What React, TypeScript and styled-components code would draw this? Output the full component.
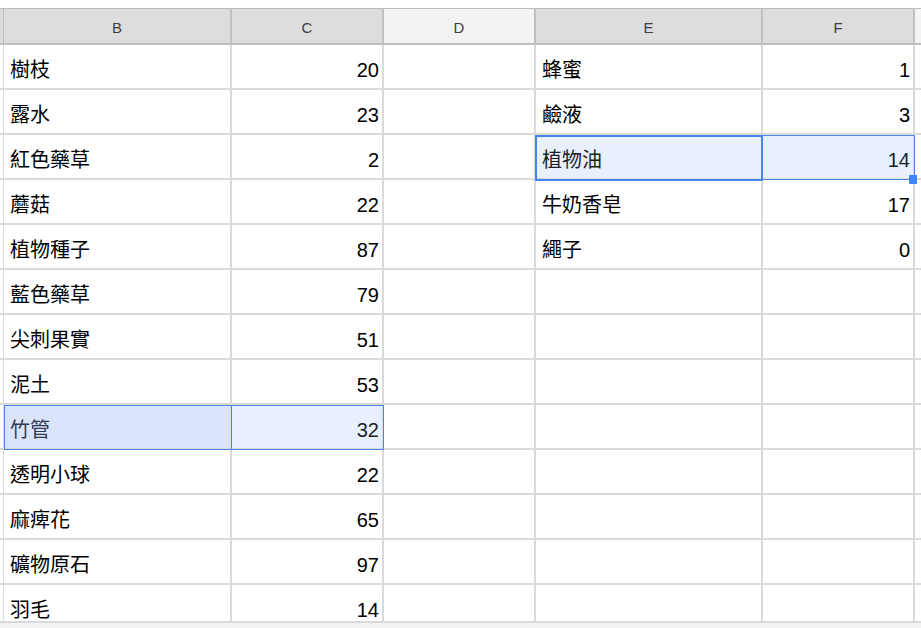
import React from "react";
import styled, { createGlobalStyle } from "styled-components";

const GlobalStyle = createGlobalStyle`
  html, body { margin: 0; padding: 0; background: #fff; overflow: hidden; }
  body { font-family: "Liberation Sans", Arial, "Noto Sans CJK TC", sans-serif; }
`;

const Page = styled.div`
  width: 921px;
  height: 628px;
  padding-top: 8px;
  box-sizing: border-box;
  display: flex;
  flex-direction: column;
  overflow: hidden;
`;

const Grid = styled.div`
  display: grid;
  grid-template-columns: 4px 228px 152px 152px 227px 152px 1fr;
`;

const HeaderCell = styled.div<{ $sel?: boolean; $edge?: boolean; $last?: boolean }>`
  height: 37px;
  box-sizing: border-box;
  border-top: 1px solid #bdbdbd;
  border-bottom: 2px solid #c0c0c0;
  border-right: ${(p) => (p.$last ? "none" : p.$edge ? "1px solid #c0c0c0" : "2px solid #c0c0c0")};
  background: ${(p) => (p.$sel ? "#dddddd" : "#f3f3f3")};
  display: flex;
  align-items: center;
  justify-content: center;
  padding-top: 2px;
  font-size: 15px;
  color: #3c4043;
`;

type Tone = "plain" | "light" | "deep";
const toneBg: Record<Tone, string> = { plain: "#ffffff", light: "#e8f0fe", deep: "#dae5fb" };

const Cell = styled.div<{ $num?: boolean; $short?: boolean; $tone?: Tone; $last?: boolean; $edge?: boolean }>`
  position: relative;
  box-sizing: border-box;
  height: ${(p) => (p.$short ? 36 : 45)}px;
  border-right: ${(p) => (p.$last ? "none" : p.$edge ? "1px solid #dadada" : "2px solid #dadada")};
  border-bottom: ${(p) => (p.$short ? "none" : "2px solid #dadada")};
  background: ${(p) => toneBg[p.$tone ?? "plain"]};
  padding: ${(p) => (p.$edge ? "0" : "15px 3px 0 6px")};
  text-align: ${(p) => (p.$num ? "right" : "left")};
  font-size: 20px;
  line-height: 20px;
  color: ${(p) => (p.$tone === "deep" ? "#2f3b52" : p.$tone === "light" ? "#1a1f2b" : "#000")};
  white-space: nowrap;
`;

const RangeBox = styled.span<{ $open?: boolean }>`
  position: absolute;
  inset: 0 -2px -2px 0;
  border: 1px solid #4a86e8;
  border-left-width: ${(p) => (p.$open ? 0 : 1)}px;
  pointer-events: none;
  z-index: 2;
`;

const ActiveBox = styled.span`
  position: absolute;
  inset: 0 -2px -3px -1px;
  border: 2px solid #4285f4;
  pointer-events: none;
  z-index: 3;
`;

const FillHandle = styled.span`
  position: absolute;
  width: 8px;
  height: 9px;
  right: -4px;
  bottom: -6px;
  background: #4285f4;
  z-index: 4;
`;

const Footer = styled.div`
  flex: 1;
  border-top: 2px solid #d9d9d9;
  background: #f3f3f3;
`;

const left: [string, number][] = [
  ["樹枝", 20],
  ["露水", 23],
  ["紅色藥草", 2],
  ["蘑菇", 22],
  ["植物種子", 87],
  ["藍色藥草", 79],
  ["尖刺果實", 51],
  ["泥土", 53],
  ["竹管", 32],
  ["透明小球", 22],
  ["麻痺花", 65],
  ["礦物原石", 97],
  ["羽毛", 14],
];

const right: [string, number][] = [
  ["蜂蜜", 1],
  ["鹼液", 3],
  ["植物油", 14],
  ["牛奶香皂", 17],
  ["繩子", 0],
];

const headers = [
  { label: "", sel: true, edge: true },
  { label: "B", sel: true },
  { label: "C", sel: true },
  { label: "D", sel: false },
  { label: "E", sel: true },
  { label: "F", sel: true },
  { label: "", sel: false, last: true },
];

export default function App() {
  return (
    <>
      <GlobalStyle />
      <Page>
        <Grid>
          {headers.map((h, i) => (
            <HeaderCell key={i} $sel={h.sel} $edge={h.edge} $last={h.last}>
              {h.label}
            </HeaderCell>
          ))}
          {left.map(([name, val], i) => {
            const short = i === left.length - 1;
            const bamboo = i === 8;
            const oil = i === 2;
            const r = right[i];
            return (
              <React.Fragment key={i}>
                <Cell $edge $short={short} />
                <Cell $short={short} $tone={bamboo ? "deep" : "plain"}>
                  {name}
                  {bamboo && <RangeBox />}
                </Cell>
                <Cell $num $short={short} $tone={bamboo ? "light" : "plain"}>
                  {val}
                  {bamboo && <RangeBox $open />}
                </Cell>
                <Cell $short={short} />
                <Cell $short={short} $tone={oil ? "light" : "plain"}>
                  {r ? r[0] : ""}
                  {oil && <ActiveBox />}
                </Cell>
                <Cell $num $short={short} $tone={oil ? "light" : "plain"}>
                  {r ? r[1] : ""}
                  {oil && <RangeBox $open />}
                  {oil && <FillHandle />}
                </Cell>
                <Cell $short={short} $last />
              </React.Fragment>
            );
          })}
        </Grid>
        <Footer />
      </Page>
    </>
  );
}
